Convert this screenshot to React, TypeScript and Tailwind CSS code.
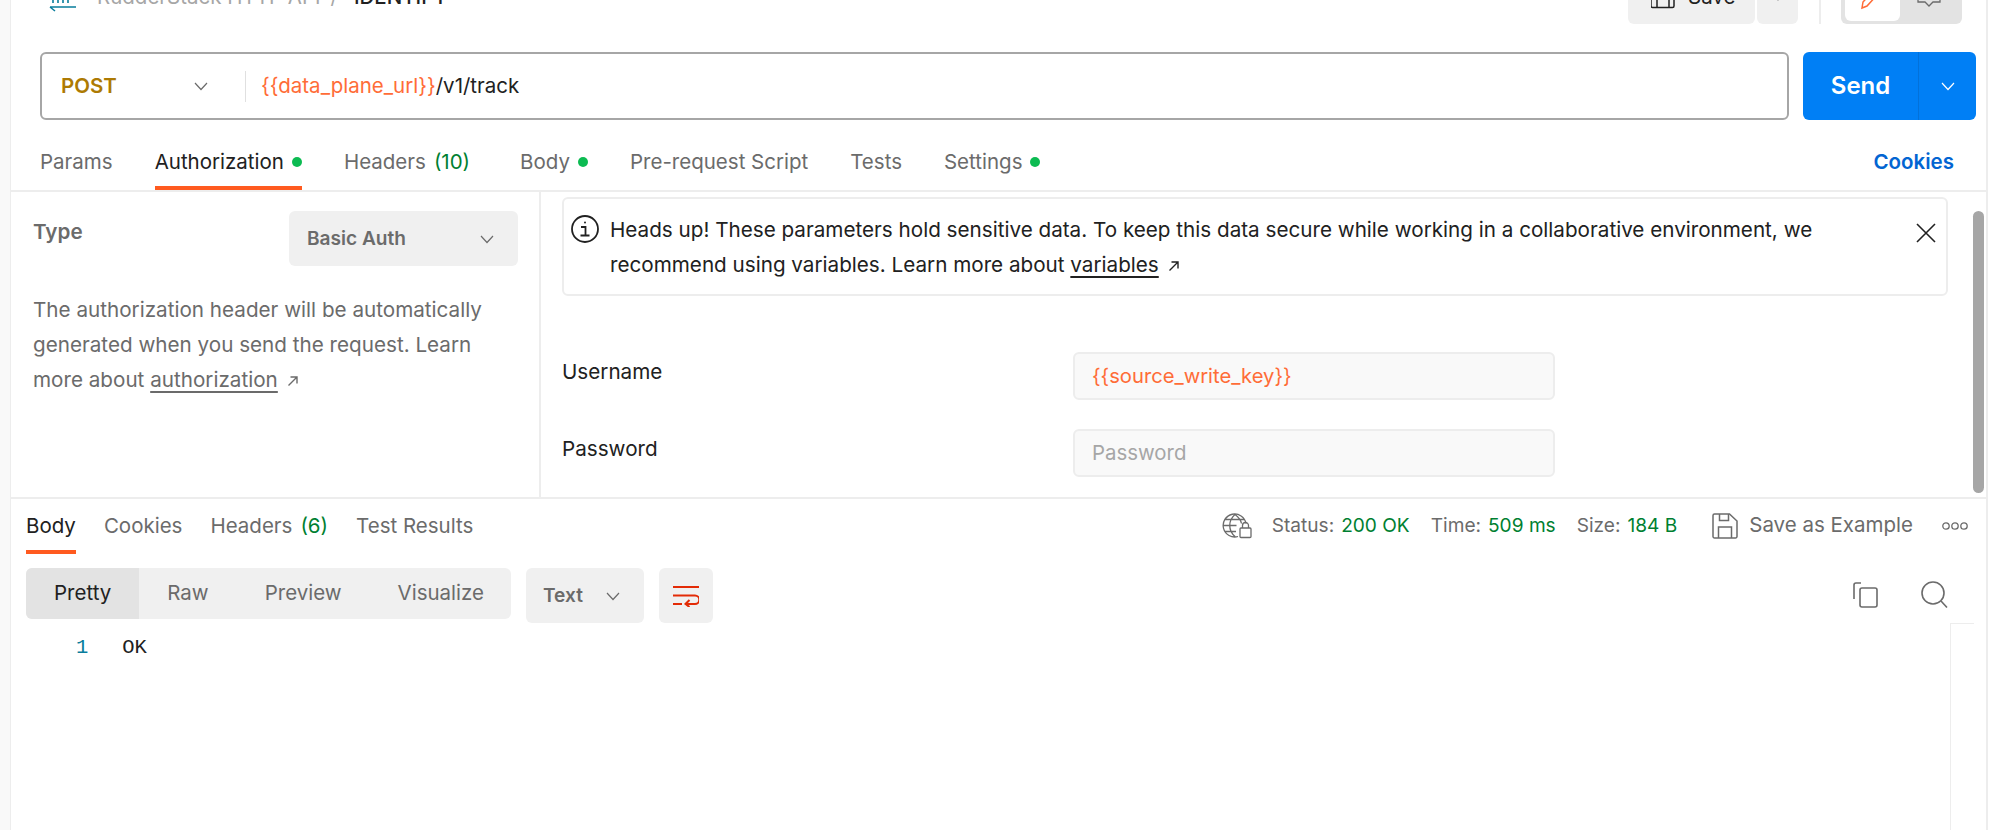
import React from "react";

const Chevron = ({ className = "", size = 16 }: { className?: string; size?: number }) => (
  <svg width={size} height={size} viewBox="0 0 16 16" fill="none" stroke="currentColor" strokeWidth="1.2" className={className}>
    <path d="M2 5l6 6.5L14 5" />
  </svg>
);

const Dot = () => <span className="ml-2 inline-block h-[10px] w-[10px] rounded-full bg-[#0cbb52]" />;

const Arrow = () => (
  <svg width="14" height="14" viewBox="0 0 14 14" fill="none" stroke="currentColor" strokeWidth="1.4" className="ml-2 inline-block">
    <path d="M2.5 11.5L11 3M4.5 3H11v6.5" />
  </svg>
);

export default function App() {
  return (
    <div className="flex h-[830px] w-[2000px] overflow-hidden bg-white font-['Inter',sans-serif] text-[20.5px] text-[#6b6b6b]">
      <div className="w-[11px] shrink-0 border-r border-[#ededed] bg-[#f9f9f9]" />
      <main className="flex w-[1977px] shrink-0 flex-col border-r-2 border-[#ededed] bg-white">
        {/* top header */}
        <header className="flex h-6 shrink-0 items-end justify-between pl-[36px] pr-[24px]">
          <div className="flex h-[54px] items-center">
            <svg width="30" height="40" viewBox="0 0 30 40" fill="none" stroke="#097d9c" strokeWidth="1.6" className="mt-[6px]">
              <path d="M3 27h26M8 31l-5-4M6 10v13M11 10v13M16 10v13M21 10v13" />
            </svg>
            <span className="ml-[20px] text-[#a6a6a6]">RudderStack HTTP API</span>
            <span className="ml-[10px] text-[#a6a6a6]">/</span>
            <span className="ml-[16px] font-medium text-[#212121]">IDENTIFY</span>
          </div>
          <div className="flex items-end">
            <div className="flex h-[54px] w-[127px] items-center rounded-b-md bg-[#f0f0f0] pl-[23px] text-[#212121]">
              <svg width="24" height="24" viewBox="0 0 24 24" fill="none" stroke="#212121" strokeWidth="1.5">
                <path d="M1 3h17l5 5v13a1.500 1.500 0 01-1.500 1.500h-20A1.500 1.500 0 010 21V4.500z" />
                <path d="M6 22V13h12v9M6 3v5h9V3" />
              </svg>
              <span className="ml-[13px]">Save</span>
            </div>
            <div className="ml-[2px] flex h-[54px] w-[41px] items-center justify-center rounded-b-md bg-[#f0f0f0] text-[#6b6b6b]">
              <Chevron size={14} />
            </div>
            <div className="ml-[21px] h-[54px] w-[2px] bg-[#ededed]" />
            <div className="ml-[20px] flex h-[54px] w-[121px] items-end rounded-b-md bg-[#e3e3e3] pb-[3px] pl-[4px]">
              <div className="flex h-[50px] w-[55px] items-end justify-center rounded-md bg-white">
                <svg width="18" height="22" viewBox="0 0 18 22" fill="none" stroke="#ff6c37" strokeWidth="1.500" className="mb-[11px] ml-[-6px]">
                  <path d="M1 20l1-6L13 2l4 4L6 18z" />
                </svg>
              </div>
              <svg width="24" height="18" viewBox="0 0 24 18" fill="none" stroke="#6b6b6b" strokeWidth="1.300" className="mb-[13px] ml-[17px]">
                <path d="M1 1v11h7l4 4 4-4h7V1" />
              </svg>
            </div>
          </div>
        </header>

        {/* url bar */}
        <div className="mt-[28px] flex h-[68px] shrink-0 gap-[14px] pl-[29px]">
          <div className="flex w-[1749px] items-center rounded-md border-2 border-[#a6a6a6] bg-white">
            <span className="ml-[19px] w-[132px] font-semibold text-[#ad7a03]">POST</span>
            <Chevron size={16} className="text-[#6b6b6b]" />
            <div className="ml-[36px] h-[31px] w-[1px] bg-[#e0e0e0]" />
            <span className="ml-[15px] text-[#ff6c37]">{"{{data_plane_url}}"}</span>
            <span className="text-[#212121]">/v1/track</span>
          </div>
          <div className="flex w-[173px] rounded-md bg-[#007ff5] text-white">
            <div className="flex w-[116px] items-center justify-center border-r border-[#0271da] text-[24px] font-semibold">Send</div>
            <div className="flex flex-1 items-center justify-center">
              <Chevron size={16} />
            </div>
          </div>
        </div>

        {/* request tabs */}
        <nav className="flex h-[72px] shrink-0 items-stretch justify-between border-b-2 border-[#ededed] pl-[29px] pr-[32px]">
          <div className="flex gap-[42px]">
            <div className="flex items-center border-b-4 border-transparent pt-[18px]">Params</div>
            <div className="flex items-center border-b-4 border-[#ff5a1f] pt-[18px] text-[#212121]">
              Authorization
              <Dot />
            </div>
            <div className="mr-2 flex items-center border-b-4 border-transparent pt-[18px]">
              Headers<span className="ml-2 text-[#007f31]">(10)</span>
            </div>
            <div className="flex items-center border-b-4 border-transparent pt-[18px]">
              Body
              <Dot />
            </div>
            <div className="flex items-center border-b-4 border-transparent pt-[18px]">Pre-request Script</div>
            <div className="flex items-center border-b-4 border-transparent pt-[18px]">Tests</div>
            <div className="flex items-center border-b-4 border-transparent pt-[18px]">
              Settings
              <Dot />
            </div>
          </div>
          <div className="flex items-center border-b-4 border-transparent pt-[18px] font-semibold text-[#0265d2]">Cookies</div>
        </nav>

        {/* auth section */}
        <section className="relative flex h-[307px] shrink-0 border-b-2 border-[#ededed]">
          <aside className="flex h-full w-[530px] shrink-0 flex-col border-r-2 border-[#ededed] pl-[22px] pr-[21px] pt-[19px] text-[20.67px]">
            <div className="flex items-start justify-between">
              <span className="mt-[5px] font-semibold">Type</span>
              <div className="flex h-[55px] w-[229px] items-center justify-between rounded-md bg-[#f0f0f0] pl-[18px] pr-[23px] text-[19.1px] font-semibold">
                Basic Auth
                <Chevron size={16} />
              </div>
            </div>
            <p className="mt-[26px] leading-[35px]">
              The authorization header will be automatically generated when you send the request. Learn more about{" "}
              <span className="underline underline-offset-4">authorization</span>
              <Arrow />
            </p>
          </aside>
          <div className="flex flex-col pl-[21px] pt-[5px] text-[20.67px]">
            <div className="flex h-[99px] w-[1386px] items-start rounded-md border-2 border-[#ededed] text-[#212121]">
              <svg width="30" height="30" viewBox="0 0 30 30" fill="none" stroke="#212121" strokeWidth="1.800" className="ml-[6px] mt-[15px] shrink-0">
                <circle cx="15" cy="15" r="13" />
                <path d="M11 13h4.500v8M10.500 21.500h9" />
                <circle cx="15" cy="8.500" r="1" fill="#212121" stroke="none" />
              </svg>
              <p className="ml-[10px] mt-[13px] w-[1240px] leading-[35px]">
                Heads up! These parameters hold sensitive data. To keep this data secure while working in a collaborative environment, we recommend using variables. Learn more about{" "}
                <span className="underline underline-offset-4">variables</span>
                <Arrow />
              </p>
              <svg width="20" height="20" viewBox="0 0 20 20" fill="none" stroke="#212121" strokeWidth="1.600" className="ml-[66px] mt-[24px] shrink-0">
                <path d="M1 1l18 18M19 1L1 19" />
              </svg>
            </div>
            <div className="mt-[56px] grid grid-cols-[511px_482px] gap-y-[29px] text-[#212121]">
              <div className="pt-[4px]">Username</div>
              <div className="flex h-[48px] items-center rounded-md border-2 border-[#ededed] bg-[#f9f9f9] pl-[17px] text-[20.2px] text-[#ff6c37]">
                {"{{source_write_key}}"}
              </div>
              <div className="pt-[4px]">Password</div>
              <div className="flex h-[48px] items-center rounded-md border-2 border-[#ededed] bg-[#f9f9f9] pl-[17px] text-[20.4px] text-[#a6a6a6]">
                Password
              </div>
            </div>
          </div>
          <div className="absolute bottom-[4px] right-[2px] top-[19px] w-[11px] rounded-full bg-[#a6a6a6]" />
        </section>

        {/* response tabs */}
        <div className="flex h-[55px] shrink-0 items-stretch justify-between pl-[15px]">
          <div className="flex gap-[28px]">
            <div className="flex items-center border-b-4 border-[#ff5a1f] pt-[3px] text-[#212121]">Body</div>
            <div className="flex items-center border-b-4 border-transparent pt-[3px]">Cookies</div>
            <div className="flex items-center border-b-4 border-transparent pt-[3px]">
              Headers<span className="ml-2 text-[#007f31]">(6)</span>
            </div>
            <div className="flex items-center border-b-4 border-transparent pt-[3px]">Test Results</div>
          </div>
          <div className="flex items-center pb-[2px] pr-[18px] text-[19.1px]">
            <svg width="30" height="26" viewBox="0 0 30 26" fill="none" stroke="#6b6b6b" strokeWidth="1.300">
              <path d="M16 23.500a11.500 11.500 0 1 1 8-13M13 1.500c-7 6-7 16 0 22M13 1.500c4 3 6 6 6.500 9M1.500 12.500h13M3 6.500h19M3 18.500h11" />
              <rect x="18" y="15" width="11" height="9.500" rx="1" />
              <path d="M20.500 15v-2.500a3 3 0 016 0V15" />
            </svg>
            <span className="ml-[20px]">Status:</span>
            <span className="ml-[7px] text-[#007f31]">200 OK</span>
            <span className="ml-[21px]">Time:</span>
            <span className="ml-[7px] text-[#007f31]">509 ms</span>
            <span className="ml-[21px]">Size:</span>
            <span className="ml-[7px] text-[#007f31]">184 B</span>
            <svg width="26" height="26" viewBox="0 0 26 26" fill="none" stroke="#6b6b6b" strokeWidth="1.500" className="ml-[35px]">
              <path d="M2.500 1h15L25 8v15.500a1.500 1.500 0 01-1.500 1.500h-21A1.500 1.500 0 011 23.500v-21A1.500 1.500 0 012.500 1z" />
              <path d="M6.500 25V14h13v11M7.500 1v6.500h9V1" />
            </svg>
            <span className="ml-[11px] text-[20.5px]">Save as Example</span>
            <svg width="26" height="8" viewBox="0 0 26 8" fill="none" stroke="#6b6b6b" strokeWidth="1.300" className="ml-[29px]">
              <circle cx="4" cy="4" r="3.200" />
              <circle cx="13" cy="4" r="3.200" />
              <circle cx="22" cy="4" r="3.200" />
            </svg>
          </div>
        </div>

        {/* toolbar */}
        <div className="mt-[14px] flex h-[55px] shrink-0 items-start pl-[15px]">
          <div className="flex h-[51px] w-[485px] overflow-hidden rounded-md bg-[#f0f0f0]">
            <div className="flex items-center bg-[#e3e3e3] px-[28px] text-[#212121]">Pretty</div>
            <div className="flex items-center px-[28px]">Raw</div>
            <div className="flex items-center px-[28px]">Preview</div>
            <div className="flex items-center px-[28px]">Visualize</div>
          </div>
          <div className="ml-[15px] flex h-[55px] w-[118px] items-center justify-between rounded-md bg-[#f0f0f0] pl-[17px] pr-[23px] text-[19.1px] font-semibold">
            Text
            <Chevron size={16} />
          </div>
          <div className="ml-[15px] flex h-[55px] w-[54px] items-center justify-center rounded-md bg-[#f0f0f0]">
            <svg width="26" height="22" viewBox="0 0 26 22" fill="none" stroke="#e32b06" strokeWidth="2">
              <path d="M0 2h26M0 10.500h22a3.800 3.800 0 010 8.500h-9M0 19h9M16.500 15L12.500 19l4 3" />
            </svg>
          </div>
          <svg width="26" height="26" viewBox="0 0 26 26" fill="none" stroke="#6b6b6b" strokeWidth="1.600" className="ml-[1140px] mt-[14px]">
            <path d="M8 1H3a2 2 0 00-2 2v14" />
            <rect x="7" y="6" width="17" height="19" rx="2" />
          </svg>
          <svg width="27" height="27" viewBox="0 0 27 27" fill="none" stroke="#6b6b6b" strokeWidth="1.600" className="ml-[42px] mt-[13px]">
            <circle cx="12" cy="12" r="11" />
            <path d="M20 20l6 6.500" />
          </svg>
        </div>

        {/* code */}
        <div className="flex min-h-0 flex-1 justify-between pt-[9px] pr-[12px]">
          <div className="flex font-['Liberation_Mono',monospace] leading-[32px]">
            <span className="ml-[65px] text-[#097d9c]">1</span>
            <span className="ml-[34px] text-[#212121]">OK</span>
          </div>
          <div className="mt-[-9px] h-[calc(100%+9px)] w-[24px] border-l border-t border-[#ededed]" />
        </div>
      </main>
    </div>
  );
}
